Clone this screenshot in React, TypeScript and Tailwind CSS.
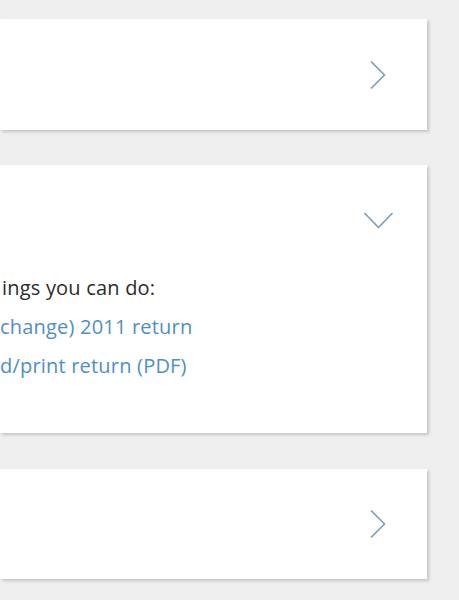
import React from 'react';

const ChevronRight = () => (
  <svg width="16" height="28" viewBox="0 0 16 28" fill="none">
    <polyline points="1.5,1 14.5,14 1.5,27" stroke="#7d9fb8" strokeWidth="1.7" strokeLinecap="round" strokeLinejoin="round" />
  </svg>
);

const ChevronDown = () => (
  <svg width="29" height="17" viewBox="0 0 29 17" fill="none">
    <polyline points="1,1.5 14.5,15.5 28,1.5" stroke="#7d9fb8" strokeWidth="1.7" strokeLinecap="round" strokeLinejoin="round" />
  </svg>
);

const Card: React.FC<{ className?: string; children?: React.ReactNode }> = ({ className = '', children }) => (
  <div className={`w-[427px] bg-white shadow-[2px_2px_3px_rgba(0,0,0,0.18)] ${className}`}>{children}</div>
);

const App: React.FC = () => {
  return (
    <div className="flex h-[600px] w-full flex-col gap-[35px] overflow-hidden bg-[#efefef] pt-[19px] font-['Open_Sans',sans-serif]">
      <Card className="flex h-[111px] items-center justify-end pr-[41px]">
        <ChevronRight />
      </Card>

      <Card className="h-[268px]">
        <div className="flex justify-end pr-[34px] pt-[47px]">
          <ChevronDown />
        </div>
        <div className="pt-[39px] text-[20px] leading-[39px] tracking-[0.2px]">
          <p className="pl-[2px] text-[#2b2b2b]">ings you can do:</p>
          <a href="#" className="block text-[#4f8fc4]">change) 2011 return</a>
          <a href="#" className="block text-[#4f8fc4]">d/print return (PDF)</a>
        </div>
      </Card>

      <Card className="mt-px flex h-[110px] items-center justify-end pr-[41px]">
        <ChevronRight />
      </Card>
    </div>
  );
};

export default App;
